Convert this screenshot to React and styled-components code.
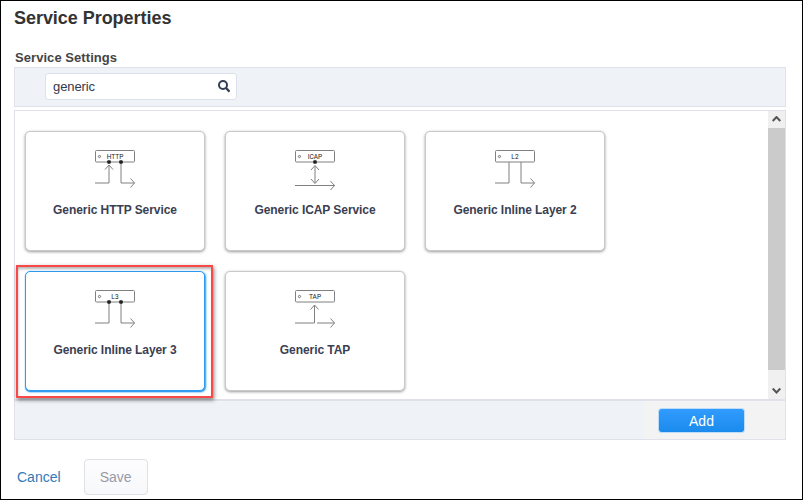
import React from "react";
import styled, { createGlobalStyle, css } from "styled-components";

const GlobalStyle = createGlobalStyle`
  *, *::before, *::after { box-sizing: border-box; }
  body { margin: 0; background: #fff; font-family: "Liberation Sans", Arial, sans-serif; color: #333; }
`;

const Page = styled.main`
  width: 803px;
  height: 500px;
  padding: 6px 16px 0 13px;
  border: 1px solid #000;
  overflow: hidden;
`;

const Title = styled.h1`
  margin: 0;
  font-size: 18px;
  line-height: 22px;
  font-weight: 700;
  letter-spacing: -0.04px;
  color: #333;
`;

const SectionLabel = styled.h2`
  margin: 20px 0 1px 1px;
  height: 17px;
  font-size: 13px;
  line-height: 17px;
  font-weight: 700;
  letter-spacing: 0.06px;
  color: #444;
`;

const SearchBar = styled.div`
  display: flex;
  align-items: flex-start;
  width: 772px;
  height: 40px;
  padding: 5px 0 0 30px;
  border: 1px solid #dfe2ea;
  background: #eff3f8;
`;

const SearchBox = styled.label`
  display: flex;
  align-items: center;
  width: 192px;
  height: 27px;
  padding: 0 6px 0 7px;
  border: 1px solid #dbe1ea;
  border-radius: 3px;
  background: #fff;
`;

const SearchInput = styled.input`
  flex: 1;
  min-width: 0;
  padding: 0;
  border: 0;
  outline: 0;
  background: transparent;
  font: 13px "Liberation Sans", Arial, sans-serif;
  letter-spacing: -0.1px;
  color: #333a4d;
`;

const Catalog = styled.section`
  display: flex;
  justify-content: space-between;
  width: 772px;
  height: 290px;
  margin-top: 3px;
  border: 1px solid #dfe2ea;
`;

const CardGrid = styled.div`
  display: grid;
  grid-template-columns: repeat(3, 180px);
  grid-auto-rows: 120px;
  gap: 20px;
  align-content: start;
  padding: 20px 0 0 10px;
`;

const Card = styled.button`
  position: relative;
  display: flex;
  flex-direction: column;
  align-items: center;
  padding: 18px 0 0;
  border: 1px solid ${(p) => (p.$selected ? "#2c9bf2" : "#c9c9c9")};
  border-radius: 5px;
  background: #fff;
  font-family: inherit;
  box-shadow: ${(p) => (p.$selected ? "0 1px 1px #2c9bf2, 1px 1px 2px #2c9bf2" : "0 1px 3px #999")};
  ${(p) =>
    p.$highlighted &&
    css`
      &::after {
        content: "";
        position: absolute;
        inset: -7px -9px -8px -10px;
        border: 2px solid #f84848;
        box-shadow: 1px 2px 4px rgba(0, 0, 0, 0.5), inset 1px 3px 3px -1px rgba(0, 0, 0, 0.3);
        pointer-events: none;
      }
    `}
`;

const CardName = styled.span`
  margin-top: 10px;
  font-size: 12px;
  line-height: 16px;
  font-weight: 700;
  letter-spacing: -0.07px;
  white-space: nowrap;
  color: #3a4052;
`;

const DeviceLabel = styled.text`
  font: 400 6.6px "Roboto", sans-serif;
  fill: #222;
  text-anchor: middle;
`;

const Scrollbar = styled.div`
  display: flex;
  flex-direction: column;
  width: 17px;
  height: 100%;
  background: #f0f0f0;
`;

const ScrollButton = styled.div`
  display: flex;
  align-items: center;
  justify-content: center;
  height: 17px;
`;

const ScrollThumb = styled.div`
  height: 242px;
  background: #cbcbcb;
`;

const ScrollTrack = styled.div`
  flex: 1;
`;

const Footer = styled.footer`
  display: flex;
  justify-content: flex-end;
  width: 772px;
  height: 40px;
  padding: 7px 40px 0 0;
  border: 1px solid #dfe2ea;
  background: linear-gradient(90deg, #eff3f8 0 629px, #f3f3f3 629px);
`;

const AddButton = styled.button`
  width: 87px;
  height: 25px;
  padding: 0;
  border: 1px solid #bddcf7;
  border-radius: 3px;
  background: linear-gradient(#329bff, #1a8bec) padding-box;
  font: 14px "Liberation Sans", Arial, sans-serif;
  color: #fff;
`;

const Actions = styled.div`
  display: flex;
  align-items: center;
  gap: 23px;
  margin: 19px 0 0 3px;
`;

const CancelLink = styled.a`
  font-size: 14px;
  color: #337ab7;
`;

const SaveButton = styled.button`
  width: 64px;
  height: 36px;
  padding: 0;
  border: 1px solid #dfe1e7;
  border-radius: 4px;
  background: linear-gradient(#fdfdfe, #f7f8fa);
  font: 14px "Liberation Sans", Arial, sans-serif;
  color: #989ba7;
`;

const DIAGRAMS = {
  http: {
    lines: "M0 33H14V15M10 19.5L14 15L18 19.5M26 13V33H39.5M35.5 28.5L39.5 33L35.5 37.5",
    dots: [14, 26],
  },
  icap: {
    lines: "M20 16V33M16 20L20 15.5L24 20M16 29L20 33.5L24 29M0 35.5H39.5M35.5 31L39.5 35.5L35.5 40",
    dots: [20],
  },
  l2: {
    lines: "M0 33H14V12M26 12V33H39.5M35.5 28.5L39.5 33L35.5 37.5",
    dots: [],
  },
  l3: {
    lines: "M0 33H14V13M26 13V33H39.5M35.5 28.5L39.5 33L35.5 37.5",
    dots: [14, 26],
  },
  tap: {
    lines: "M0 33H19.5V15M15.5 19.5L19.5 15L23.5 19.5M22 33H39.5M35.5 28.5L39.5 33L35.5 37.5",
    dots: [],
  },
};

function ServiceDiagram({ kind, label }) {
  const { lines, dots } = DIAGRAMS[kind];
  return (
    <svg width="40" height="42" viewBox="0 0 40 42" fill="none" stroke="#808080">
      <rect x="0.5" y="0.5" width="39" height="11.5" rx="1" />
      <circle cx="4.5" cy="6.5" r="1.1" stroke="#555" strokeWidth="0.8" />
      <path d={lines} />
      {dots.map((x) => (
        <rect key={x} x={x - 1.8} y="10.2" width="3.6" height="3.6" rx="1" fill="#222" stroke="none" />
      ))}
      <DeviceLabel x="20" y="8.5" stroke="none">{label}</DeviceLabel>
    </svg>
  );
}

function Chevron({ down }) {
  return (
    <svg width="9" height="7" viewBox="0 0 9 7" fill="none" stroke="#555" strokeWidth="2">
      <path d={down ? "M0.7 1.5L4.5 5.5L8.3 1.5" : "M0.7 5L4.5 1L8.3 5"} />
    </svg>
  );
}

const SERVICES = [
  { kind: "http", label: "HTTP", name: "Generic HTTP Service" },
  { kind: "icap", label: "ICAP", name: "Generic ICAP Service" },
  { kind: "l2", label: "L2", name: "Generic Inline Layer 2" },
  { kind: "l3", label: "L3", name: "Generic Inline Layer 3", selected: true },
  { kind: "tap", label: "TAP", name: "Generic TAP" },
];

export default function App() {
  return (
    <>
      <GlobalStyle />
      <Page>
        <Title>Service Properties</Title>
        <SectionLabel>Service Settings</SectionLabel>
        <SearchBar>
          <SearchBox>
            <SearchInput defaultValue="generic" aria-label="Search services" />
            <svg width="12" height="13" viewBox="0 0 12 13" fill="none" stroke="#333f55" strokeWidth="2">
              <circle cx="5" cy="5" r="4" />
              <path d="M8 8L11.5 11.7" strokeWidth="2.3" />
            </svg>
          </SearchBox>
        </SearchBar>
        <Catalog>
          <CardGrid>
            {SERVICES.map((s) => (
              <Card key={s.kind} $selected={s.selected} $highlighted={s.selected}>
                <ServiceDiagram kind={s.kind} label={s.label} />
                <CardName>{s.name}</CardName>
              </Card>
            ))}
          </CardGrid>
          <Scrollbar>
            <ScrollButton><Chevron /></ScrollButton>
            <ScrollThumb />
            <ScrollTrack />
            <ScrollButton><Chevron down /></ScrollButton>
          </Scrollbar>
        </Catalog>
        <Footer>
          <AddButton>Add</AddButton>
        </Footer>
        <Actions>
          <CancelLink>Cancel</CancelLink>
          <SaveButton disabled>Save</SaveButton>
        </Actions>
      </Page>
    </>
  );
}
